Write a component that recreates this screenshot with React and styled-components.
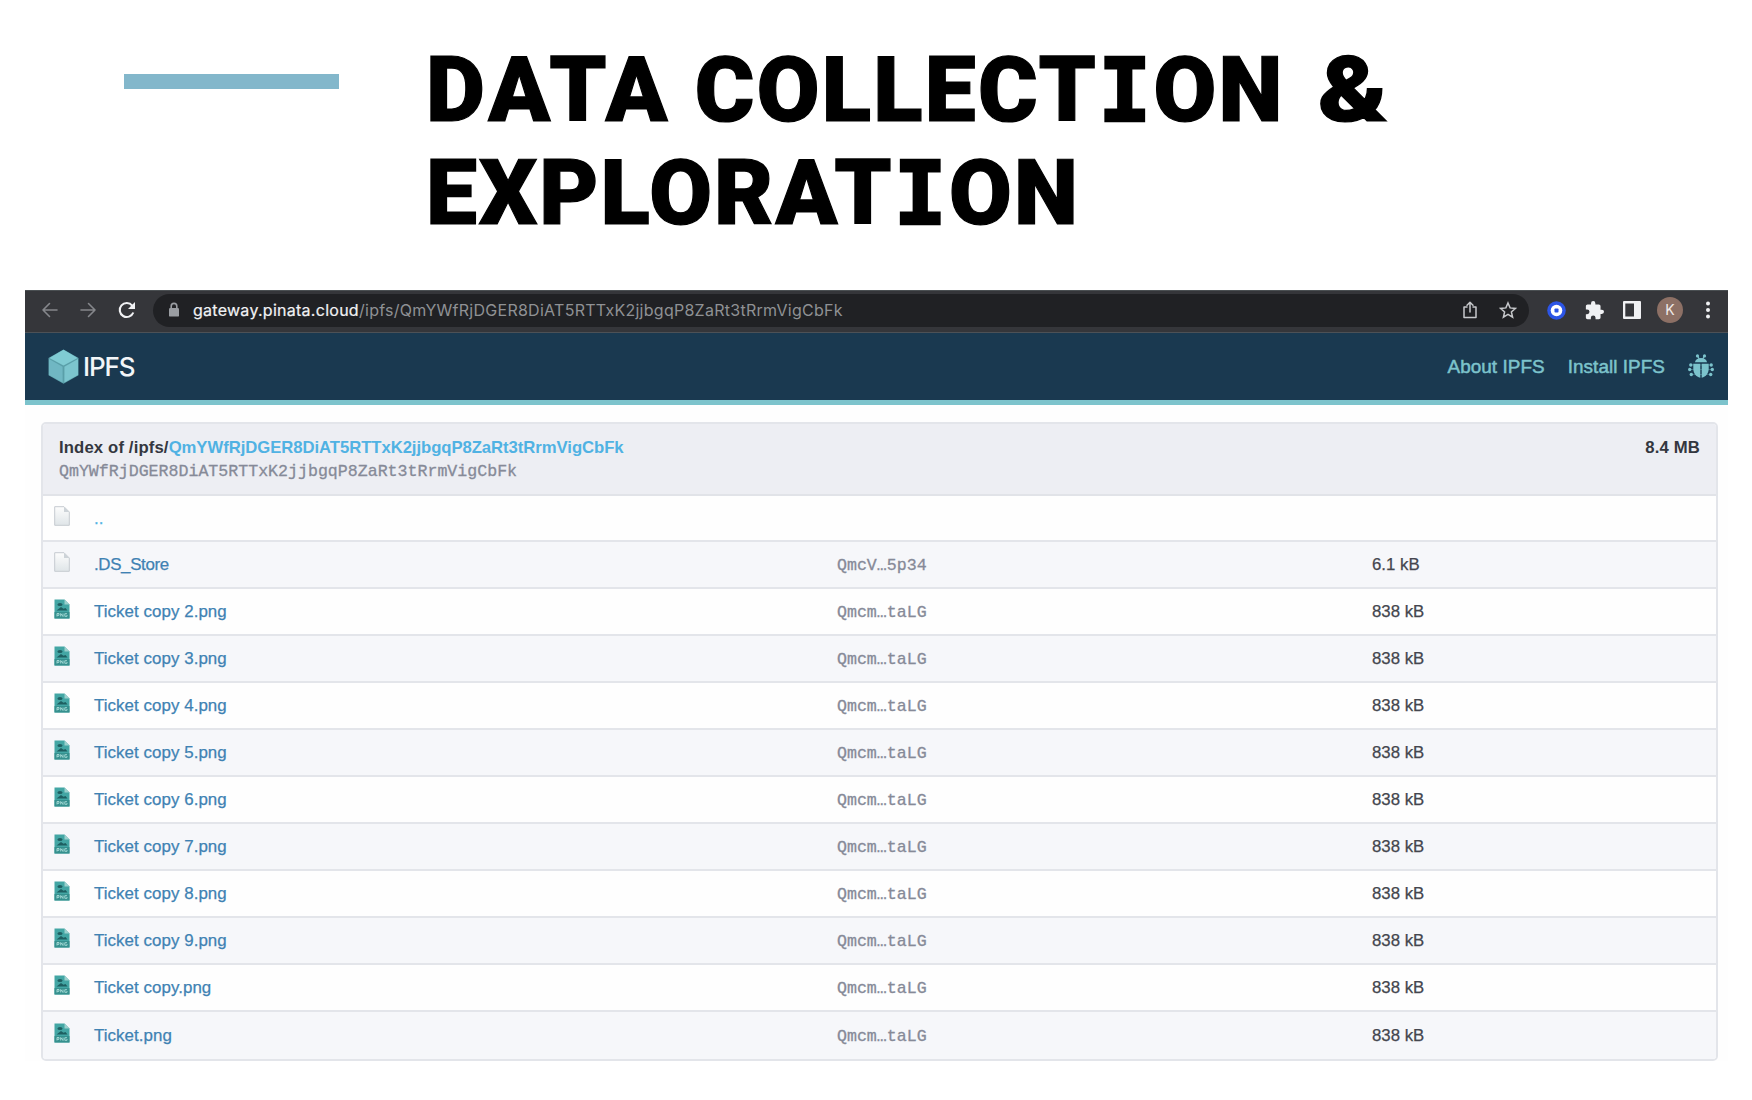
import React from "react";
import styled, { createGlobalStyle, css } from "styled-components";

const Global = createGlobalStyle`
  * { box-sizing: border-box; }
  body { margin: 0; background: #fff; font-family: "Liberation Sans", Arial, sans-serif; }
`;

const Slide = styled.main`
  width: 1752px;
  height: 1100px;
  overflow: hidden;
  background: #fff;
`;

const Heading = styled.header`
  display: flex;
  height: 290px;
  padding: 39px 0 0 124px;
`;

const Accent = styled.div`
  width: 215px;
  height: 15px;
  margin: 35px 87px 0 0;
  background: #83b7cb;
`;

const Title = styled.h1`
  margin: 0;
  color: #000;
  font: 900 91px/103.4px Roboto, sans-serif;
  -webkit-text-stroke: 1.2px #000;
  stroke-linejoin: round;
`;

const Line = styled.span`
  display: flex;
  white-space: nowrap;
`;

const Word = styled.span`
  margin-left: ${(p) => p.$before || 0}px;
  letter-spacing: ${(p) => p.$track || 0}px;
`;

const Slab = styled.span`
  font-family: "DejaVu Sans Mono", monospace;
  font-size: 88px;
  line-height: 1;
  font-weight: 700;
  -webkit-text-stroke: 2.6px #000;
`;

const Ampersand = styled.span`
  margin-left: 33px;
  transform: scaleX(1.14);
  transform-origin: left;
`;

const Browser = styled.section`
  width: 1703px;
  margin-left: 25px;
  background: #fefefe;
`;

const Toolbar = styled.div`
  display: flex;
  align-items: center;
  height: 43px;
  padding: 0 0 3px 16px;
  background: #35363a;
  border-top: 1px solid #4a4f52;
  border-bottom: 1px solid #4d5156;
  svg { display: block; flex: none; }
`;

const NavButtons = styled.div`
  display: flex;
  gap: 20px;
  width: 112px;
`;

const Address = styled.div`
  display: flex;
  align-items: center;
  width: 1376px;
  height: 33px;
  padding: 0 12px 0 15px;
  border-radius: 17px;
  background: #202124;
  color: #8f9194;
  font: 400 16px/20px Inter, sans-serif;
`;

const Url = styled.span`
  flex: 1;
  margin-left: 13px;
  letter-spacing: 0.27px;
  white-space: nowrap;
`;

const Host = styled.span`
  color: #f1f2f4;
  -webkit-text-stroke: 0.2px;
`;

const PillIcons = styled.div`
  display: flex;
  align-items: center;
  gap: 21px;
`;

const Extensions = styled.div`
  display: grid;
  grid-template-columns: repeat(5, 38px);
  place-items: center;
  padding-left: 8px;
`;

const Avatar = styled.span`
  width: 26px;
  height: 26px;
  border-radius: 50%;
  background: #8d7065;
  color: #f0eae8;
  font: 400 14px/26px Inter, sans-serif;
  text-align: center;
`;

const SiteBar = styled.nav`
  display: flex;
  align-items: center;
  height: 72px;
  padding: 0 14px 0 23px;
  background: #1a3950;
  border-bottom: 5px solid #7cc3cc;
  svg { display: block; flex: none; }
`;

const Brand = styled.span`
  flex: 1;
  margin-left: 4px;
  color: #f3f6f8;
  font: 500 26px/32px Inter, sans-serif;
  letter-spacing: -1.1px;
`;

const NavLink = styled.a`
  margin-right: 23px;
  color: #7cc3cc;
  font-size: 18.9px;
  line-height: 24px;
  letter-spacing: 0.06px;
  -webkit-text-stroke: 0.5px #7cc3cc;
  white-space: nowrap;
`;

const Listing = styled.div`
  margin: 17px 10px 0 16px;
  border: 2px solid #e3e5ea;
  border-radius: 5px;
  overflow: hidden;
`;

const ListingHead = styled.div`
  display: flex;
  justify-content: space-between;
  height: 72px;
  padding: 12px 16px 0 16px;
  background: #edeef3;
  border-bottom: 2px solid #e1e3e8;
  color: #34373f;
  font-size: 16.7px;
  font-weight: 700;
  line-height: 24px;
`;

const HeadLabel = styled.span`
  letter-spacing: 0.14px;
`;

const Hash = styled.div`
  color: #868a98;
  font: 400 16.6px/24px "Liberation Mono", monospace;
  -webkit-text-stroke: 0.3px #868a98;
`;

const HashLink = styled.span`
  color: #50b2e3;
  letter-spacing: -0.055px;
`;

const Row = styled.div`
  display: grid;
  grid-template-columns: 51px 743px 535px 1fr;
  align-items: center;
  height: ${(p) => (p.$first ? 46 : p.$last ? 46.2 : 47.05)}px;
  background: ${(p) => (p.$shade ? "#f6f7fa" : "#fefefe")};
  color: #44464e;
  font-size: 16.8px;
  ${(p) => !p.$last && css`border-bottom: 2px solid #e3e5ea;`}
  ${Hash} { padding-top: 3px; }
`;

const IconCell = styled.span`
  padding: 0 0 5px 11px;
  svg { display: block; }
`;

const FileLink = styled.a`
  color: ${(p) => (p.$light ? "#50b2e3" : "#3f82b3")};
  padding-top: ${(p) => (p.$light ? 2 : 1)}px;
  font-size: 16.9px;
  letter-spacing: ${(p) => (p.$tight ? -0.35 : 0.06)}px;
  -webkit-text-stroke: 0.25px;
`;

const Size = styled.span`
  padding-top: 1px;
  -webkit-text-stroke: 0.25px;
`;

const stroke = { fill: "none", strokeLinecap: "round", strokeLinejoin: "round" };

const Arrow = ({ flip }) => (
  <svg width="18" height="18" viewBox="0 0 18 18" {...stroke} stroke="#85878b" strokeWidth="1.6" transform={flip ? "scale(-1 1)" : undefined}>
    <path d="M16 9H2M8.5 2.5 2 9l6.5 6.5" />
  </svg>
);

const Reload = () => (
  <svg width="20" height="18" viewBox="0 0 20 18" fill="none" stroke="#f1f2f4" strokeWidth="2.1">
    <path d="M16.3 11.5A7 7 0 1 1 15.2 4.6" />
    <path d="M18 1v7h-7z" fill="#f1f2f4" stroke="none" />
  </svg>
);

const Lock = () => (
  <svg width="12" height="16" viewBox="0 0 12 16" fill="none" stroke="#9a9da2">
    <rect x="1" y="6" width="10" height="8.6" rx="1.2" fill="#9a9da2" stroke="none" />
    <path d="M3.2 6.5V4.2a2.8 2.8 0 0 1 5.6 0V6.5" strokeWidth="1.6" />
  </svg>
);

const Share = () => (
  <svg width="16" height="18" viewBox="0 0 16 18" {...stroke} stroke="#c6c8cb" strokeWidth="1.5">
    <path d="M5 6H2v10.5h12V6h-3M8 11V1.500M5 4.300l3-3 3 3" />
  </svg>
);

const Star = () => (
  <svg width="18" height="18" viewBox="0 0 18 18" fill="none" stroke="#c6c8cb" strokeWidth="1.5">
    <path d="m9 2 2.100 4.900 5.300.5-4 3.500 1.200 5.200L9 13.400l-4.600 2.700 1.200-5.200-4-3.500 5.300-.5z" />
  </svg>
);

const Wallet = () => (
  <svg width="19" height="19" viewBox="0 0 19 19">
    <circle cx="9.5" cy="9.5" r="9.3" fill="#2c55e6" />
    <circle cx="9.5" cy="9.5" r="5.8" fill="#fff" />
    <rect x="7.5" y="7.5" width="4" height="4" rx=".8" fill="#2c55e6" />
  </svg>
);

const Puzzle = () => (
  <svg width="19" height="19" viewBox="1 1 22 22" fill="#f0f1f3">
    <path d="M20.500 11H19V7c0-1.100-.9-2-2-2h-4V3.500a2.500 2.500 0 0 0-5 0V5H4c-1.100 0-2 .9-2 2v3.800h1.500a2.700 2.700 0 0 1 0 5.400H2V20c0 1.100.9 2 2 2h3.800v-1.500a2.700 2.700 0 0 1 5.400 0V22H17c1.100 0 2-.9 2-2v-4h1.500a2.500 2.500 0 0 0 0-5z" />
  </svg>
);

const Panel = () => (
  <svg width="18" height="18" viewBox="0 0 18 18">
    <rect width="18" height="18" rx="1" fill="#f0f1f3" />
    <rect x="2.3" y="2.5" width="8.7" height="13" fill="#35363a" />
  </svg>
);

const Dots = () => (
  <svg width="6" height="18" viewBox="0 0 6 18" fill="#f0f1f3">
    <circle cx="3" cy="2.5" r="2" />
    <circle cx="3" cy="9" r="2" />
    <circle cx="3" cy="15.5" r="2" />
  </svg>
);

const Cube = () => (
  <svg width="31" height="35" viewBox="0 0 31 35">
    <path d="M15.500.5 30.500 9v17.200l-15 8.500-15-8.500V9z" fill="#5a9fa9" />
    <path d="M15.500.8 29.600 8.900l-14.100 7.600L1.400 8.900z" fill="#80cbd3" />
    <path d="M1 10.100l13.600 7.700v15.800L1 25.900z" fill="#70b7c3" />
    <path d="M30 10.100l-13.600 7.700v15.800L30 25.900z" fill="#7cc5ce" />
  </svg>
);

const Bug = () => (
  <svg width="26" height="25" viewBox="0 0 26 25" fill="#7cc3cc">
    <path d="M7 8.300a6 4.300 0 0 1 12 0zM5.300 9.800h7V23.700C8 23 5.300 19 5.300 14.500zM20.700 9.800h-7V23.700c4.300-.7 7-4.700 7-9.200z" />
    <path d="m9.500 2 1.800 3M16.500 2l-1.800 3" stroke="#7cc3cc" strokeWidth="1.2" />
    <circle cx="9.5" cy="1.900" r="1.600" />
    <circle cx="16.5" cy="1.900" r="1.600" />
    {[[2.8, 11], [1.7, 15.5], [3.3, 20.5]].map(([x, y]) => (
      <React.Fragment key={y}>
        <path d={`M${x} ${y}H${26 - x}`} stroke="#7cc3cc" strokeOpacity=".35" />
        <circle cx={x} cy={y} r="1.7" />
        <circle cx={26 - x} cy={y} r="1.7" />
      </React.Fragment>
    ))}
  </svg>
);

const BlankFile = () => (
  <svg width="16" height="20" viewBox="0 0 16 20">
    <defs>
      <linearGradient id="paper" x1="0" y1="0" x2="0" y2="1">
        <stop offset="0" stopColor="#fdfdfd" />
        <stop offset="1" stopColor="#dfe5e8" />
      </linearGradient>
    </defs>
    <path d="M.7.700H10l5.300 5.300v13.300H.700z" fill="url(#paper)" stroke="#c6cbd0" />
    <path d="M10 .700V6h5.300z" fill="#cdd3d8" />
  </svg>
);

const PngFile = () => (
  <svg width="16" height="20" viewBox="0 0 16 20">
    <path d="M.5.500H10.500l5 5v14H.500z" fill="#43a6a4" />
    <path d="M10.500.500v5h5z" fill="#9bd0cd" />
    <ellipse cx="6" cy="5.500" rx="2.600" ry="1.500" fill="#1e5f61" />
    <path d="M2.500 11.500 7 8l2.500 1.700 2-.6 2 2.400z" fill="#1e5f61" />
    <rect x=".5" y="13" width="15" height="6.500" fill="#35908e" />
    <path d="M3 17.500v-3h2v1.800H3M6.700 17.500v-3l2.300 3v-3M13 14.700h-2.200v2.600H13V16" fill="none" stroke="#a9dcd8" strokeWidth=".9" />
  </svg>
);

const cid = "QmYWfRjDGER8DiAT5RTTxK2jjbgqP8ZaRt3tRrmVigCbFk";

const files = [
  { name: "..", parent: true },
  { name: ".DS_Store", hash: "QmcV…5p34", size: "6.1 kB", tight: true },
  ...[2, 3, 4, 5, 6, 7, 8, 9].map((n) => ({ name: `Ticket copy ${n}.png` })),
  { name: "Ticket copy.png" },
  { name: "Ticket.png" },
];

export default function App() {
  return (
    <Slide>
      <Global />
      <Heading>
        <Accent />
        <Title>
          <Line>
            <Word $track={4.3}>DATA</Word>
            <Word $before={23} $track={2.2}>COLLECT<Slab>I</Slab>ON</Word>
            <Ampersand>&amp;</Ampersand>
          </Line>
          <Line>
            <Word $track={2.1}>EXPLORAT<Slab>I</Slab>ON</Word>
          </Line>
        </Title>
      </Heading>
      <Browser>
        <Toolbar>
          <NavButtons><Arrow /><Arrow flip /><Reload /></NavButtons>
          <Address>
            <Lock />
            <Url><Host>gateway.pinata.cloud</Host>/ipfs/{cid}</Url>
            <PillIcons><Share /><Star /></PillIcons>
          </Address>
          <Extensions><Wallet /><Puzzle /><Panel /><Avatar>K</Avatar><Dots /></Extensions>
        </Toolbar>
        <SiteBar>
          <Cube />
          <Brand>IPFS</Brand>
          <NavLink>About IPFS</NavLink>
          <NavLink>Install IPFS</NavLink>
          <Bug />
        </SiteBar>
        <Listing>
          <ListingHead>
            <div>
              <HeadLabel>Index of /ipfs/</HeadLabel><HashLink>{cid}</HashLink>
              <Hash>{cid}</Hash>
            </div>
            <HeadLabel>8.4 MB</HeadLabel>
          </ListingHead>
          {files.map((f, i) => (
            <Row key={f.name} $first={i === 0} $shade={i % 2 === 1} $last={i === files.length - 1}>
              <IconCell>{i < 2 ? <BlankFile /> : <PngFile />}</IconCell>
              <FileLink $light={f.parent} $tight={f.tight}>{f.name}</FileLink>
              <Hash as="span">{f.parent ? "" : f.hash || "Qmcm…taLG"}</Hash>
              <Size>{f.parent ? "" : f.size || "838 kB"}</Size>
            </Row>
          ))}
        </Listing>
      </Browser>
    </Slide>
  );
}
